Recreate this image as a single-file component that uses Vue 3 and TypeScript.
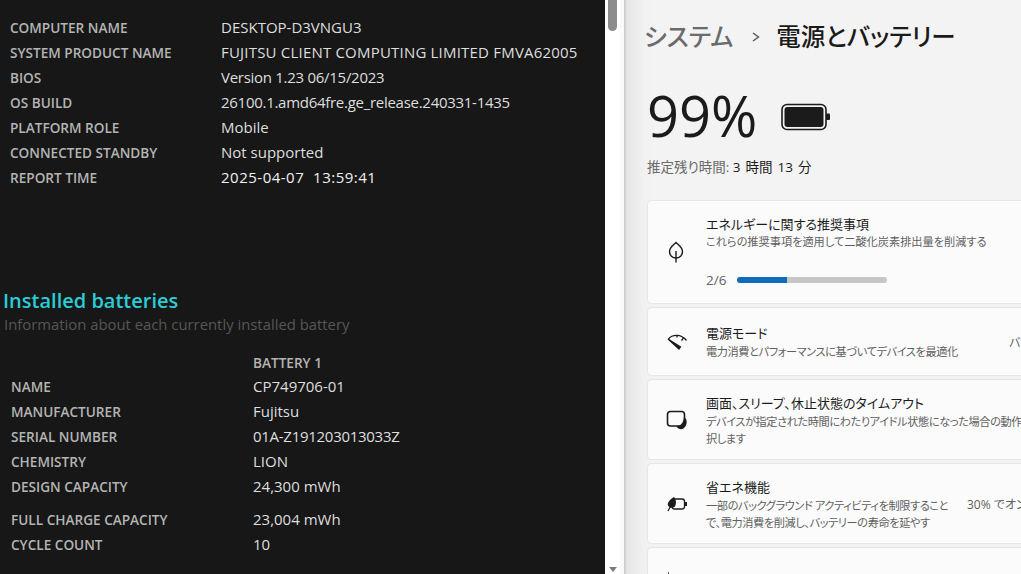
<template>
  <div class="screen">
    <!-- battery report -->
    <section class="report">
      <div class="info-rows">
        <div v-for="row in systemRows" :key="row.label" class="info-row">
          <span class="label">{{ row.label }}</span>
          <span class="value" :class="[row.fit, { strong: row.strong }]">{{ row.value }}</span>
        </div>
      </div>
      <h2 class="report-title">Installed batteries</h2>
      <p class="report-sub">Information about each currently installed battery</p>
      <div class="battery-rows">
        <div class="battery-row battery-head">
          <span class="label"></span>
          <span class="label">BATTERY 1</span>
        </div>
        <div
          v-for="row in batteryRows"
          :key="row.label"
          class="battery-row"
          :class="{ spaced: row.spaced }"
        >
          <span class="label">{{ row.label }}</span>
          <span class="value" :class="row.fit">{{ row.value }}</span>
        </div>
      </div>
    </section>

    <div class="scrollbar">
      <div class="thumb"></div>
      <div class="arrow"></div>
    </div>
    <div class="divider"></div>

    <!-- settings window -->
    <section class="settings">
      <h1 class="crumbs">
        <span class="crumb-parent">システム</span>
        <svg class="crumb-sep" width="10" height="12" viewBox="0 0 10 12">
          <path d="M2 2 L7.5 6 L2 10" fill="none" stroke="#555" stroke-width="1.4" />
        </svg>
        <span>電源とバッテリー</span>
      </h1>

      <div class="level">
        <span class="percent">99%</span>
        <svg width="50" height="28" viewBox="0 0 50 28">
          <rect x="1" y="1.5" width="44" height="25" rx="5" fill="none" stroke="#1b1b1b" stroke-width="1.6" />
          <rect x="3.5" y="4" width="39" height="20" rx="3" fill="#1b1b1b" />
          <rect x="45" y="10.5" width="4" height="6.5" rx="1" fill="#1b1b1b" />
        </svg>
      </div>
      <p class="remaining">推定残り時間: <span>3 時間 13 分</span></p>

      <div class="cards">
        <div class="card card-energy">
          <svg class="icon" width="20" height="22" viewBox="0 0 20 22" fill="none" stroke="#1b1b1b" stroke-width="1.4">
            <path d="M10 1.5 C12.5 4 16.5 6.5 16.5 10.5 C16.5 14.5 13.5 17 10 17 C6.5 17 3.5 14.5 3.5 10.5 C3.5 6.5 7.5 4 10 1.5 Z" />
            <path d="M10 10 V21.5" />
          </svg>
          <div class="card-text">
            <div class="card-title">エネルギーに関する推奨事項</div>
            <div class="card-desc">これらの推奨事項を適用して二酸化炭素排出量を削減する</div>
            <div class="progress-row">
              <span class="progress-label">2/6</span>
              <div class="progress">
                <div class="progress-fill" :style="{ width: progress + '%' }"></div>
              </div>
            </div>
          </div>
        </div>

        <div class="card card-mode">
          <svg class="icon" width="22" height="20" viewBox="0 0 22 20" fill="none" stroke="#1b1b1b" stroke-width="1.3">
            <path d="M2.5 7 C6 2.5 15 1.5 20.5 8.5" />
            <path d="M17.5 6 L15.5 8.5 M11 3 V5.5" />
            <path d="M2 7 L13 17 L14.5 15 Z" fill="#1b1b1b" stroke-width="1.2" />
          </svg>
          <div class="card-text">
            <div class="card-title">電源モード</div>
            <div class="card-desc desc-tight">電力消費とパフォーマンスに基づいてデバイスを最適化</div>
          </div>
          <span class="card-value mode-value">バランス</span>
        </div>

        <div class="card card-timeout">
          <svg class="icon" width="22" height="22" viewBox="0 0 22 22" fill="none">
            <rect x="1.5" y="2.5" width="17" height="14.5" rx="3" stroke="#1b1b1b" stroke-width="1.6" />
            <path d="M18 8 C21.8 10 21.8 17 17 19.8 C15 20.8 12 20.2 10.5 17.5 C14 17.5 17.5 14 18 8 Z" fill="#1b1b1b" />
          </svg>
          <div class="card-text">
            <div class="card-title">画面、スリープ、休止状態のタイムアウト</div>
            <div class="card-desc desc-tight desc-wrap desc-timeout">デバイスが指定された時間にわたりアイドル状態になった場合の動作を選択します</div>
          </div>
        </div>

        <div class="card card-saver">
          <svg class="icon" width="22" height="20" viewBox="0 0 22 20" fill="none">
            <rect x="6" y="5" width="12.5" height="10" rx="2.5" stroke="#1b1b1b" stroke-width="1.3" />
            <rect x="18.5" y="8" width="2.5" height="4" fill="#1b1b1b" />
            <path d="M8 3 C10.5 6 10.5 10.5 8.5 13 C6.5 14.5 3 14 1.8 11 C1.5 8 4.5 5 8 3 Z" fill="#1b1b1b" />
            <path d="M7 8 L2 17" stroke="#1b1b1b" stroke-width="1.2" />
          </svg>
          <div class="card-text saver-text">
            <div class="card-title">省エネ機能</div>
            <div class="card-desc desc-tight desc-wrap">一部のバックグラウンド アクティビティを制限すること<br />で、電力消費を削減し、バッテリーの寿命を延やす</div>
          </div>
          <span class="card-value saver-value">30% でオンになります</span>
        </div>

        <div class="card card-last">
          <span class="last-mark"></span>
        </div>
      </div>
    </section>
  </div>
</template>

<script setup lang="ts">
interface Row {
  label: string
  value: string
  strong?: boolean
  spaced?: boolean
  fit?: 'tight' | 'wide'
}

// digit-heavy values run a bit wider than in the original font
const systemRows: Row[] = [
  { label: 'COMPUTER NAME', value: 'DESKTOP-D3VNGU3' },
  { label: 'SYSTEM PRODUCT NAME', value: 'FUJITSU CLIENT COMPUTING LIMITED FMVA62005', fit: 'wide' },
  { label: 'BIOS', value: 'Version 1.23 06/15/2023', fit: 'tight' },
  { label: 'OS BUILD', value: '26100.1.amd64fre.ge_release.240331-1435', fit: 'tight' },
  { label: 'PLATFORM ROLE', value: 'Mobile' },
  { label: 'CONNECTED STANDBY', value: 'Not supported' },
  { label: 'REPORT TIME', value: '2025-04-07  13:59:41', strong: true },
]

const batteryRows: Row[] = [
  { label: 'NAME', value: 'CP749706-01' },
  { label: 'MANUFACTURER', value: 'Fujitsu' },
  { label: 'SERIAL NUMBER', value: '01A-Z191203013033Z', fit: 'tight' },
  { label: 'CHEMISTRY', value: 'LION' },
  { label: 'DESIGN CAPACITY', value: '24,300 mWh' },
  { label: 'FULL CHARGE CAPACITY', value: '23,004 mWh', spaced: true },
  { label: 'CYCLE COUNT', value: '10' },
]

const progress = 33.3
</script>

<style>
html,
body {
  margin: 0;
  overflow: hidden;
}
</style>

<style scoped>
.screen {
  display: flex;
  width: 1021px;
  height: 574px;
  overflow: hidden;
  font-family: 'Open Sans', 'Noto Sans CJK JP', sans-serif;
}

/* left pane */
.report {
  width: 605px;
  flex: none;
  box-sizing: border-box;
  padding-top: 15px;
  background: #171717;
  font-size: 15px;
  line-height: 25px;
}

.info-rows {
  padding-left: 10px;
}

.info-row {
  display: grid;
  grid-template-columns: 211px 1fr;
  align-items: baseline;
}

.label {
  color: #b4b4b4;
  font-weight: 600;
  font-size: 13.6px;
}

.value {
  color: #dedede;
  white-space: pre;
}

.value.tight {
  letter-spacing: -0.28px;
}

.value.wide {
  letter-spacing: 0.2px;
}

.value.strong {
  font-weight: 500;
  letter-spacing: 0.5px;
  color: #f0f0f0;
}

.report-title {
  margin: 96px 0 0 3px;
  font-size: 20px;
  line-height: 30px;
  font-weight: 600;
  color: #2cccd6;
}

.report-sub {
  margin: -5px 0 0 4px;
  font-size: 14.85px;
  line-height: 26px;
  color: #565656;
}

.battery-rows {
  margin-top: 13px;
  padding-left: 11px;
}

.battery-row {
  display: grid;
  grid-template-columns: 242px 1fr;
  align-items: baseline;
}

.battery-head {
  margin-bottom: -1px;
}

.battery-row.spaced {
  margin-top: 8px;
}

/* scrollbar */
.scrollbar {
  width: 15px;
  flex: none;
  display: flex;
  flex-direction: column;
  justify-content: space-between;
  align-items: center;
  background: #fff;
}

.thumb {
  width: 9px;
  height: 31px;
  border-radius: 0 0 5px 5px;
  background: #8c8c8c;
}

.arrow {
  width: 0;
  height: 0;
  margin-bottom: 2px;
  border-left: 4px solid transparent;
  border-right: 4px solid transparent;
  border-top: 5px solid #7b7b7b;
}

.divider {
  width: 4px;
  flex: none;
  background: #fafafa;
}

/* right pane */
.settings {
  flex: 1;
  min-width: 0;
  box-sizing: border-box;
  padding: 0 0 0 23px;
  background: linear-gradient(90deg, #c9c9c9 0, #e6e6e6 3px, #f1f1f1 20px, #f3f3f3 32px);
  color: #1b1b1b;
  overflow: hidden;
  font-feature-settings: 'palt';
}

.crumbs {
  display: flex;
  align-items: center;
  margin: 19px 0 0 -3px;
  font-size: 24.5px;
  line-height: 36px;
  font-weight: 500;
}

.crumb-parent {
  color: #6b6b6b;
}

.crumb-sep {
  margin: 0 15px 0 18px;
}

.level {
  display: flex;
  align-items: center;
  gap: 24px;
  margin-top: 25px;
}

.percent {
  font-size: 56px;
  line-height: 70px;
}

.level svg {
  margin-top: 3px;
}

.remaining {
  margin: 7px 0 0;
  font-size: 13.5px;
  line-height: 20px;
  color: #6a6a6a;
}

.remaining span {
  color: #1b1b1b;
  word-spacing: 1.5px;
}

.cards {
  display: flex;
  flex-direction: column;
  gap: 3px;
  width: 500px;
  margin-top: 23px;
}

.card {
  box-sizing: border-box;
  display: flex;
  align-items: center;
  position: relative;
  padding-left: 58px;
  background: #fbfbfb;
  border: 1px solid #e6e6e6;
  border-radius: 4px;
}

.icon {
  position: absolute;
  left: 18px;
}

.card-energy {
  height: 104px;
}

.card-energy .icon {
  top: 40px;
}

.card-mode {
  height: 69px;
}

.card-mode .card-title {
  margin: -1px 0 1px;
}

.card-timeout,
.card-saver {
  height: 81px;
}

.card-last {
  height: 40px;
}

.last-mark {
  position: absolute;
  left: 20px;
  top: 24px;
  width: 1px;
  height: 3px;
  background: #555;
}

.card-text {
  flex: none;
  width: 370px;
}

.saver-text {
  width: 245px;
}

.card-title {
  font-size: 13px;
  line-height: 20px;
}

.card-desc {
  font-size: 11.2px;
  line-height: 16px;
  color: #5f5f5f;
}

.desc-tight {
  letter-spacing: -0.4px;
}

.desc-wrap {
  line-height: 17px;
}

.desc-timeout {
  width: 345px;
}

.progress-row {
  display: flex;
  align-items: center;
  gap: 11px;
  margin-top: 20px;
}

.progress-label {
  font-size: 13.5px;
  line-height: 20px;
  color: #5f5f5f;
}

.progress {
  width: 150px;
  height: 6px;
  border-radius: 3px;
  background: #c6c6c6;
  overflow: hidden;
}

.progress-fill {
  height: 100%;
  background: #0f6cbd;
}

.card-value {
  font-size: 12px;
  color: #5f5f5f;
  white-space: nowrap;
}

.mode-value {
  margin-left: -67px;
}

.saver-value {
  margin-left: 16px;
}
</style>
